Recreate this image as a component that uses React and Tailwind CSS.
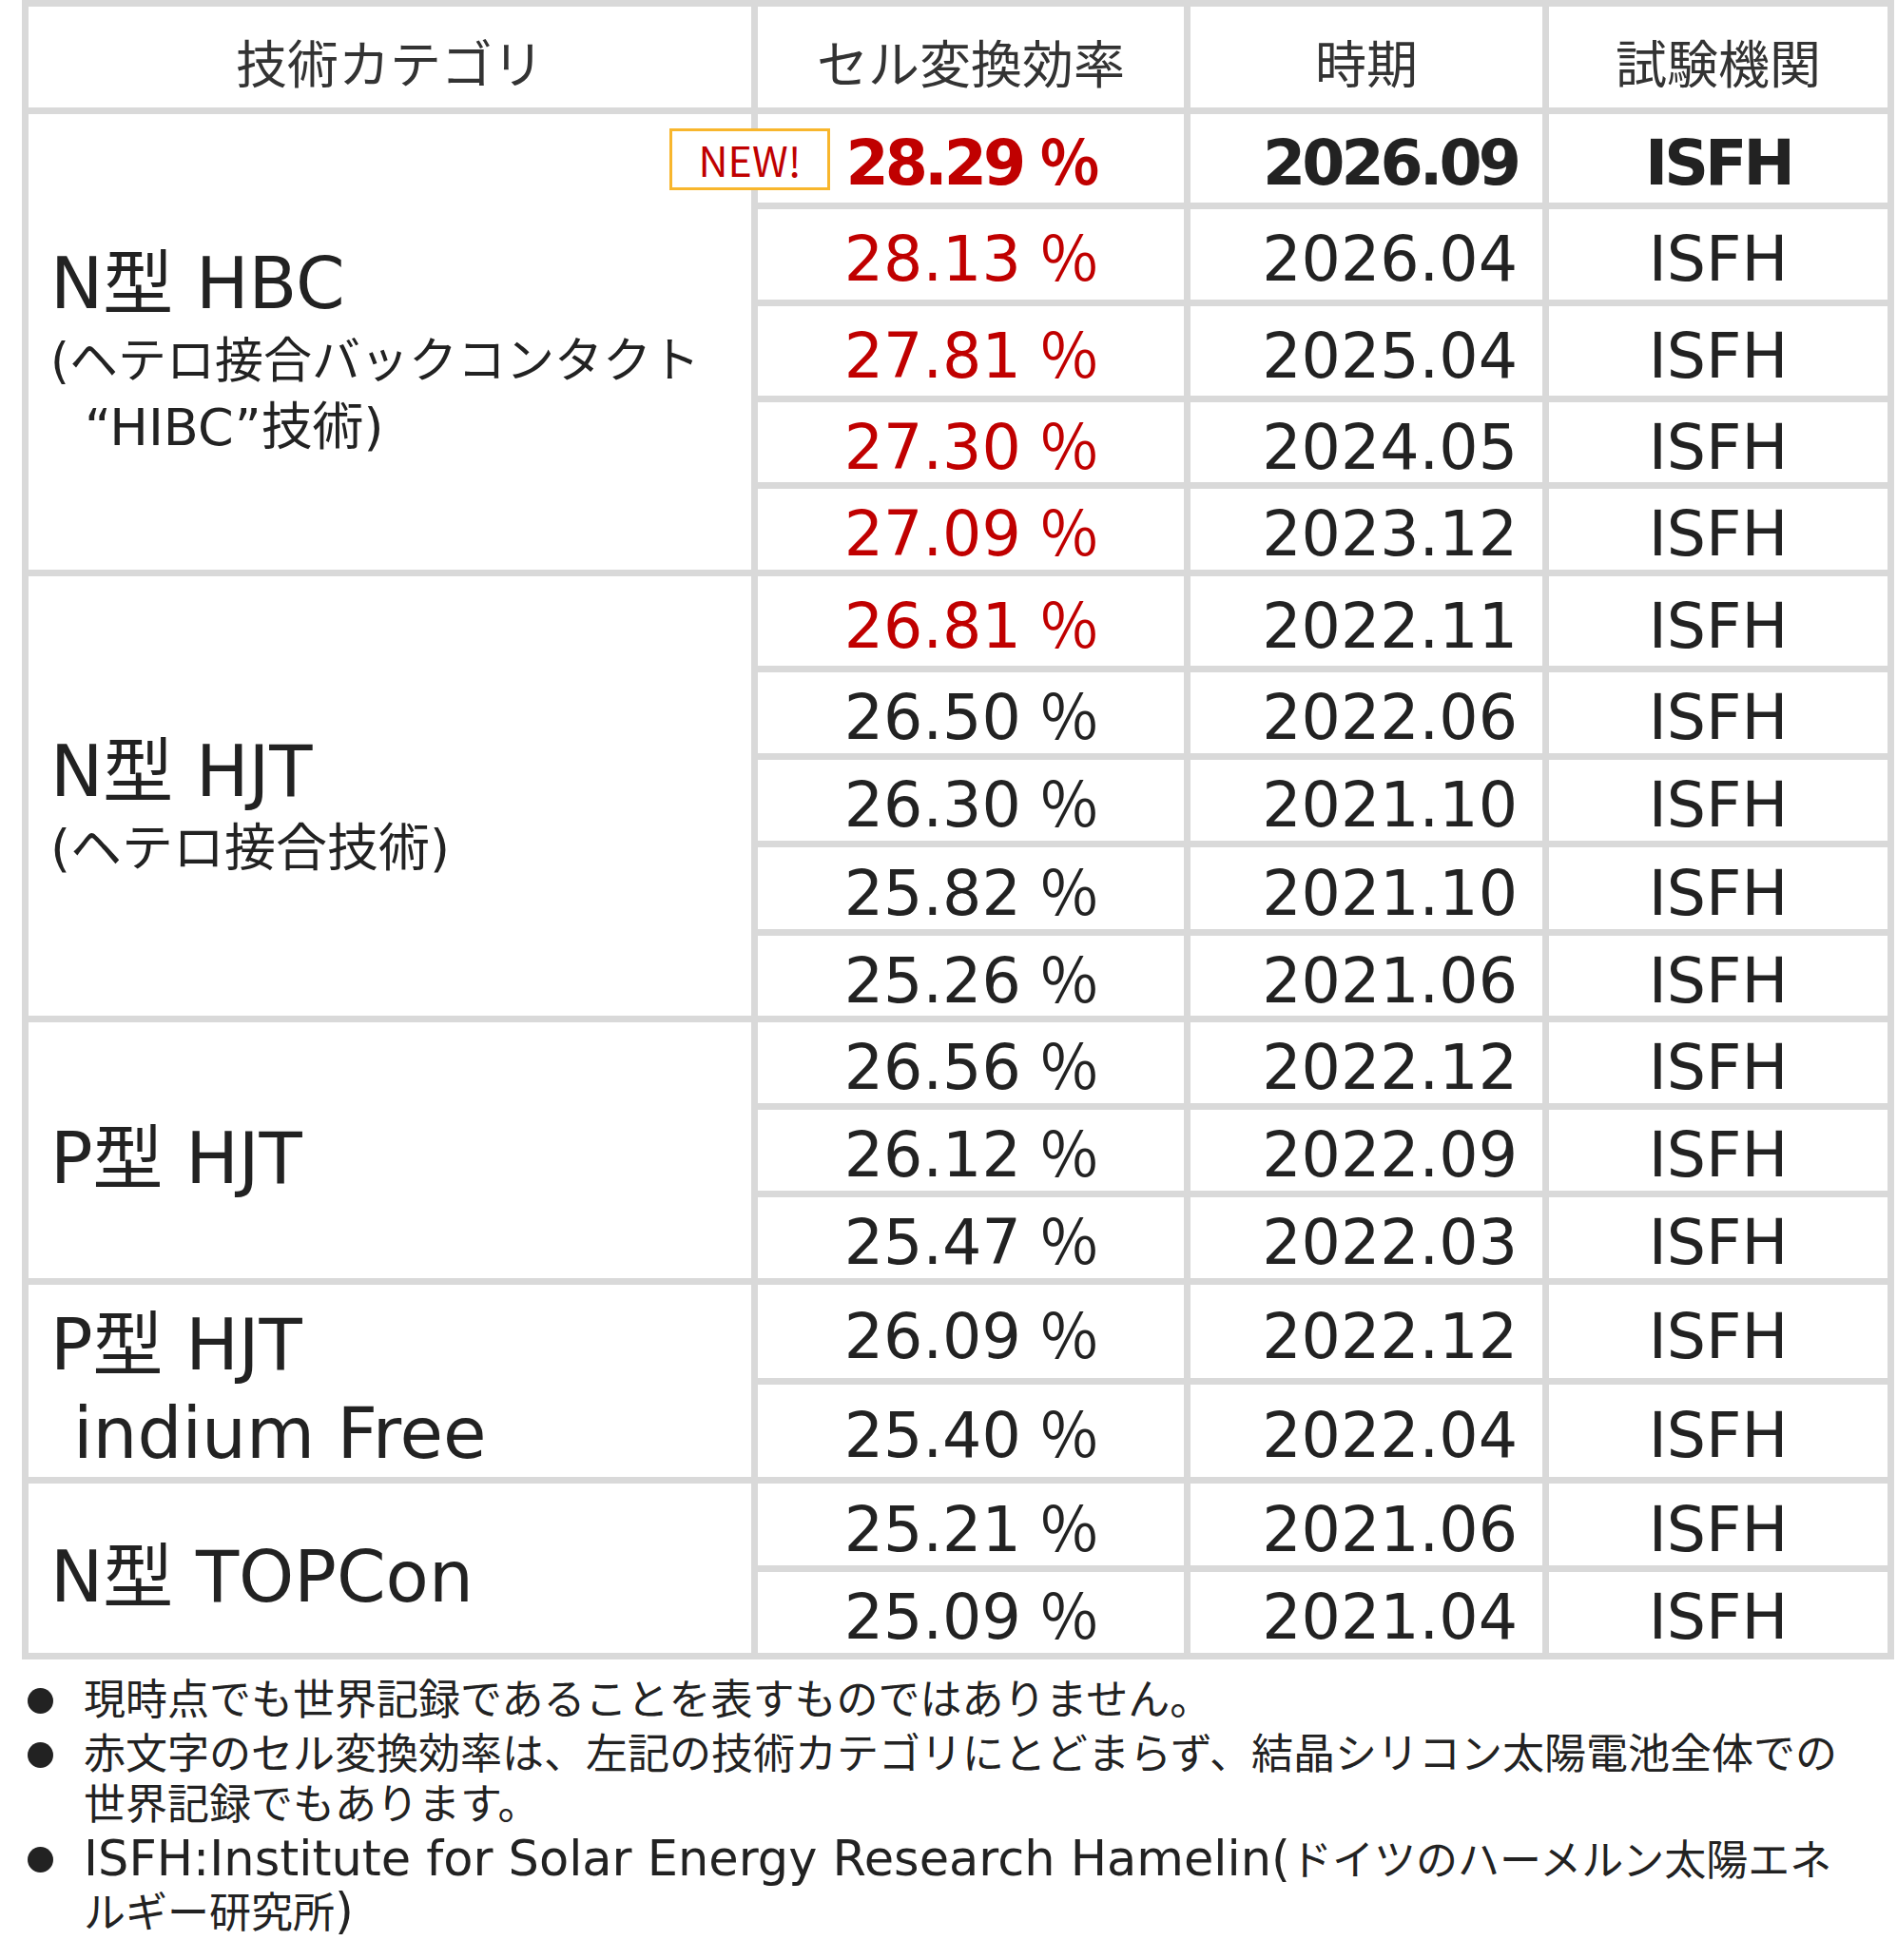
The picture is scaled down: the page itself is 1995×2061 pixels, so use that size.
import React from 'react';

const groups = [
  {
    span: 'row-span-5',
    lines: [
      { text: 'N型 HBC', big: true },
      { text: '(ヘテロ接合バックコンタクト', size: 'text-[51px]' },
      { text: '“HIBC”技術)', size: 'text-[54px]', indent: 'pl-[36px]' },
    ],
    rows: [
      { eff: '28.29', red: true, date: '2026.09', isNew: true },
      { eff: '28.13', red: true, date: '2026.04' },
      { eff: '27.81', red: true, date: '2025.04' },
      { eff: '27.30', red: true, date: '2024.05' },
      { eff: '27.09', red: true, date: '2023.12' },
    ],
  },
  {
    span: 'row-span-5',
    lines: [
      { text: 'N型 HJT', big: true },
      { text: '(ヘテロ接合技術)', size: 'text-[54px]' },
    ],
    rows: [
      { eff: '26.81', red: true, date: '2022.11' },
      { eff: '26.50', date: '2022.06' },
      { eff: '26.30', date: '2021.10' },
      { eff: '25.82', date: '2021.10' },
      { eff: '25.26', date: '2021.06' },
    ],
  },
  {
    span: 'row-span-3',
    lines: [{ text: 'P型 HJT', big: true }],
    rows: [
      { eff: '26.56', date: '2022.12' },
      { eff: '26.12', date: '2022.09' },
      { eff: '25.47', date: '2022.03' },
    ],
  },
  {
    span: 'row-span-2',
    lines: [
      { text: 'P型 HJT', big: true },
      { text: 'indium Free', big: true, indent: 'pl-[24px]' },
    ],
    rows: [
      { eff: '26.09', date: '2022.12' },
      { eff: '25.40', date: '2022.04' },
    ],
  },
  {
    span: 'row-span-2',
    lines: [{ text: 'N型 TOPCon', big: true }],
    rows: [
      { eff: '25.21', date: '2021.06' },
      { eff: '25.09', date: '2021.04' },
    ],
  },
];

const headers = ['技術カテゴリ', 'セル変換効率', '時期', '試験機関'];

function GroupCell({ group }) {
  return (
    <div className={`${group.span} flex flex-col justify-center bg-white pl-[23px] pt-[18px] text-[#222]`}>
      {group.lines.map((l, i) =>
        l.big ? (
          <div key={i} className={`whitespace-nowrap text-[74px] leading-[93px] ${l.indent || ''}`}>{l.text}</div>
        ) : (
          <div key={i} className={`whitespace-nowrap ${l.size} leading-[70px] ${l.indent || ''}`}>{l.text}</div>
        )
      )}
    </div>
  );
}

function DataCells({ row }) {
  const weight = row.isNew ? 'font-bold tracking-[-4px]' : 'font-normal';
  return (
    <>
      <div className="relative flex items-center justify-center bg-white pt-[5px]">
        {row.isNew && (
          <div className="absolute left-[-93px] top-[15px] z-10 flex h-[65px] w-[169px] items-center justify-center border-[3px] border-[#f8b62d] bg-white font-['Noto_Sans_CJK_JP',sans-serif] text-[43px] leading-none text-[#c00000]">
            NEW!
          </div>
        )}
        <span className={`whitespace-nowrap text-[65px] leading-none ${weight} ${row.red ? 'text-[#c00000]' : 'text-[#222]'}`}>
          {row.eff} <span className="font-['Noto_Sans_CJK_JP',sans-serif] text-[65px] leading-none">%</span>
        </span>
      </div>
      <div className="flex items-center justify-end bg-white pt-[10px] pr-[26px]">
        <span className={`text-[65px] leading-none text-[#222] ${weight}`}>{row.date}</span>
      </div>
      <div className="flex items-center justify-center bg-white pt-[10px]">
        <span className={`text-[65px] leading-none text-[#222] ${weight}`}>ISFH</span>
      </div>
    </>
  );
}

function Bullet({ children }) {
  return (
    <li className="flex items-start">
      <span className="mt-[14px] mr-[32px] h-[27px] w-[27px] shrink-0 rounded-full bg-[#222]" />
      <div>{children}</div>
    </li>
  );
}

export default function App() {
  return (
    <div className="min-h-[2061px] w-[1995px] bg-white font-['DejaVu_Sans','Noto_Sans_CJK_JP',sans-serif] text-[#222]">
      <div className="ml-[23px] grid w-[1969px] grid-cols-[760px_448px_370px_356px] grid-rows-[106px_93px_95px_94px_84px_85px_94px_85px_85px_86px_84px_85px_85px_85px_98px_97px_86px_85px] gap-[7px] bg-[#d9d9d9] p-[7px]">
        {headers.map(h => (
          <div key={h} className="flex items-center justify-center bg-white pt-[8px] font-['Noto_Sans_CJK_JP',sans-serif] text-[54px] text-[#333]">
            {h}
          </div>
        ))}
        {groups.map((g, gi) => (
          <React.Fragment key={gi}>
            <GroupCell group={g} />
            {g.rows.map((r, ri) => (
              <DataCells key={ri} row={r} />
            ))}
          </React.Fragment>
        ))}
      </div>

      <ul className="mt-[16px] ml-[29px] flex flex-col gap-[4px] text-[44px] leading-[53px] text-[#222]">
        <Bullet>
          <div className="whitespace-nowrap">現時点でも世界記録であることを表すものではありません。</div>
        </Bullet>
        <Bullet>
          <div className="whitespace-nowrap">赤文字のセル変換効率は、左記の技術カテゴリにとどまらず、結晶シリコン太陽電池全体での</div>
          <div className="whitespace-nowrap">世界記録でもあります。</div>
        </Bullet>
        <Bullet>
          <div className="whitespace-nowrap">
            <span className="text-[51px]">ISFH:Institute for Solar Energy Research Hamelin(</span>ドイツのハーメルン太陽エネ
          </div>
          <div className="whitespace-nowrap">
            ルギー研究所<span className="text-[51px]">)</span>
          </div>
        </Bullet>
      </ul>
    </div>
  );
}
